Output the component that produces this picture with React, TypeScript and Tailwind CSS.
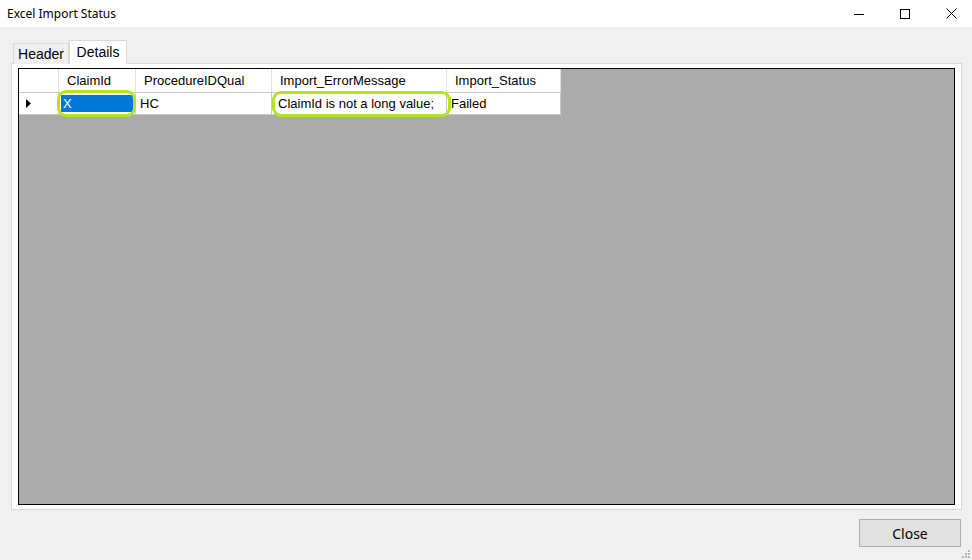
import React from "react";

// column layout of the DataGridView
const columns = [
  { title: "ClaimId", width: 77 },
  { title: "ProcedureIDQual", width: 136 },
  { title: "Import_ErrorMessage", width: 175 },
  { title: "Import_Status", width: 114 },
];

const TitleBar: React.FC = () => (
  <div className="flex h-[27px] items-center bg-white pl-[7px] pr-[15px]">
    <span className="text-[12px] text-black [font-family:'Noto_Sans','Open_Sans',sans-serif]">
      Excel Import Status
    </span>
    <div className="ml-auto flex items-center gap-[36px]">
      <svg width="10" height="10" viewBox="0 0 10 10">
        <line x1="0" y1="5.5" x2="10" y2="5.5" stroke="#000" strokeWidth="1" />
      </svg>
      <svg width="10" height="10" viewBox="0 0 10 10">
        <rect x="0.5" y="0.5" width="9" height="9" fill="none" stroke="#000" strokeWidth="1" />
      </svg>
      <svg width="11" height="11" viewBox="0 0 11 11">
        <path d="M0.5 0.5 L10.5 10.5 M10.5 0.5 L0.5 10.5" stroke="#000" strokeWidth="1" />
      </svg>
    </div>
  </div>
);

const Tabs: React.FC = () => (
  <div className="relative z-10 -mb-px ml-[13px] flex h-[24px] items-end">
    <div className="flex h-[21px] w-[56px] items-center justify-center border border-b-0 border-[#d9d9d9] bg-[#f0f0f0] text-[14px] text-black">
      Header
    </div>
    <div className="flex h-[24px] w-[58px] items-start justify-center border border-b-0 border-[#d9d9d9] bg-white pt-[1px] text-[14px] text-black">
      Details
    </div>
  </div>
);

const Grid: React.FC = () => (
  <div className="relative h-full w-full border border-black bg-[#ababab]">
    {/* header row */}
    <div className="flex h-[24px] w-fit border-b border-[#c8c8c8] bg-white">
      <div className="w-[40px] border-r border-[#e0e0e0]" />
      {columns.map((c) => (
        <div
          key={c.title}
          className="flex items-center border-r border-[#e0e0e0] pl-[8px] text-[13px] text-black"
          style={{ width: c.width }}
        >
          {c.title}
        </div>
      ))}
    </div>
    {/* data row */}
    <div className="flex h-[22px] w-fit bg-white text-[13px] text-black">
      <div className="flex w-[40px] items-center border-r border-b border-[#c8c8c8] pl-[7px]">
        <svg width="5" height="9" viewBox="0 0 5 9">
          <path d="M0 0 L5 4.5 L0 9 Z" fill="#000" />
        </svg>
      </div>
      <div className="flex w-[77px] items-center border-r border-b border-[#c8c8c8] px-[2px]">
        <div className="flex h-[17px] w-full items-center bg-[#0078d7] pl-[2px] text-white">X</div>
      </div>
      <div className="flex w-[136px] items-center border-r border-b border-[#c8c8c8] pl-[4px]">HC</div>
      <div className="flex w-[175px] items-center border-r border-b border-[#c8c8c8] pl-[6px]">
        ClaimId is not a long value;
      </div>
      <div className="flex w-[114px] items-center border-r border-b border-[#c8c8c8] pl-[4px]">Failed</div>
    </div>
    {/* hand-drawn highlight marks over the cells */}
    <div className="absolute left-[38px] top-[21px] h-[27px] w-[79px] rounded-[9px] border-[3px] border-[#b5e61d]" />
    <div className="absolute left-[253px] top-[22px] h-[26px] w-[179px] rounded-[9px] border-[3px] border-[#b5e61d]" />
  </div>
);

const SizeGrip: React.FC = () => (
  <svg width="8" height="8" viewBox="0 0 8 8" className="absolute bottom-[2px] right-[2px]">
    {[
      [6, 0],
      [6, 3],
      [3, 3],
      [6, 6],
      [3, 6],
      [0, 6],
    ].map(([x, y], i) => (
      <rect key={i} x={x} y={y} width="2" height="2" fill="#b8b8b8" />
    ))}
  </svg>
);

export default function App() {
  return (
    <div className="relative flex h-[560px] w-[972px] flex-col overflow-hidden bg-[#f0f0f0] [font-family:'Liberation_Sans',Arial,sans-serif]">
      <TitleBar />
      <div className="mt-[13px]">
        <Tabs />
        <div className="ml-[11px] h-[447px] w-[951px] border border-[#d9d9d9] bg-white px-[6px] pt-[4px] pb-[4px]">
          <Grid />
        </div>
      </div>
      <div className="mt-[9px] flex justify-end pr-[11px]">
        <button className="h-[28px] w-[102px] border border-[#adadad] bg-[#e1e1e1] text-[14px] text-black [font-family:'Noto_Sans','Open_Sans',sans-serif]">
          Close
        </button>
      </div>
      <SizeGrip />
    </div>
  );
}
